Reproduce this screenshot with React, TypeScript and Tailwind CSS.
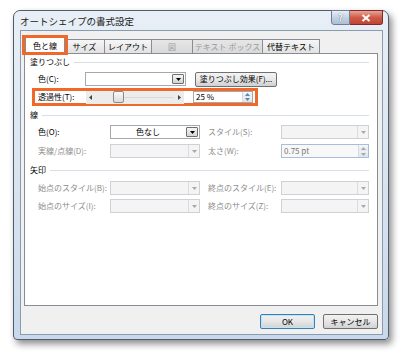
import React from "react";

const ORANGE = "border-[#ef6a2a]";

function Arrow({ disabled = false }: { disabled?: boolean }) {
  return (
    <svg width="5" height="3" viewBox="0 0 5 3">
      <path d="M0 0h5L2.5 3z" fill={disabled ? "#a8a8a8" : "#000"} />
    </svg>
  );
}

function Combo({ width, text, disabled = false }: { width: string; text?: string; disabled?: boolean }) {
  return (
    <div
      className={`${width} h-[14px] flex items-stretch border ${
        disabled ? "border-[#cfd1d6] bg-[#f4f4f4]" : "border-[#a6a8ae] bg-white"
      }`}
    >
      <div className="flex-1 flex items-center justify-center text-black">{text}</div>
      {disabled ? (
        <div className="w-[11px] border-l border-[#dcdcdc] flex items-center justify-center">
          <Arrow disabled />
        </div>
      ) : (
        <div className="w-[12px] m-px border border-[#6f6f6f] rounded-[1px] bg-gradient-to-b from-[#f6f6f6] to-[#d4d4d4] flex items-center justify-center">
          <Arrow />
        </div>
      )}
    </div>
  );
}

function Spin({ blue = false }: { blue?: boolean }) {
  const c = blue ? "#5a86b8" : "#a8a8a8";
  return (
    <div className="w-[10px] flex flex-col border-l border-[#d6dbe3]">
      <div className="flex-1 flex items-center justify-center bg-gradient-to-b from-[#f4f7fb] to-[#e3e9f1]">
        <svg width="5" height="3" viewBox="0 0 5 3">
          <path d="M0 3h5L2.5 0z" fill={c} />
        </svg>
      </div>
      <div className="flex-1 flex items-center justify-center bg-gradient-to-b from-[#eef2f7] to-[#dde4ee]">
        <svg width="5" height="3" viewBox="0 0 5 3">
          <path d="M0 0h5L2.5 3z" fill={c} />
        </svg>
      </div>
    </div>
  );
}

function Heading({ label }: { label: string }) {
  return (
    <div className="h-[12px] flex items-center gap-[4px] pr-[3px]">
      <span>{label}</span>
      <div className="flex-1 h-px bg-[#d6dfe7]" />
    </div>
  );
}

const tabs = [
  { label: "サイズ", w: "w-[41px]" },
  { label: "レイアウト", w: "w-[48px]" },
  { label: "図", w: "w-[42px]", disabled: true },
  { label: "テキスト ボックス", w: "w-[71px]", disabled: true },
  { label: "代替テキスト", w: "w-[58px]" },
];

export default function App() {
  return (
    <div className="w-[400px] h-[354px] bg-white pl-[13px] pt-[10px] text-[8px] leading-none text-black font-['Noto_Sans_CJK_JP','Noto_Sans',sans-serif]">
      <div className="w-[376px] h-[330px] flex flex-col rounded-t-[7px] rounded-b-[4px] border border-[#4f5c6b] bg-gradient-to-b from-[#e8eff6] via-[#d9e4ef] to-[#c9d9ea] shadow-[3px_4px_7px_rgba(0,0,0,0.45)] pl-[6px] pr-[5px] pb-[4px]">
        {/* title bar */}
        <div className="h-[19px] flex justify-between">
          <span className="pt-[6px] text-[9.5px] text-[#1a1a1a]">オートシェイプの書式設定</span>
          <div className="flex h-[15px] -mt-px">
            <div className="w-[19px] rounded-bl-[3px] border border-[#6d7f96] bg-gradient-to-b from-[#e7eef6] via-[#c3d2e3] to-[#aebfd4] flex items-center justify-center text-[9px] font-bold text-white [text-shadow:0_0_1px_#334]">
              ?
            </div>
            <div className="w-[33px] rounded-br-[3px] border border-l-0 border-[#7d2a28] bg-gradient-to-b from-[#e8a496] via-[#cf5a48] to-[#c04633] flex items-center justify-center">
              <svg width="10" height="8" viewBox="0 0 10 8">
                <path d="M1.5 1l7 6M8.5 1l-7 6" stroke="#fff" strokeWidth="2" />
              </svg>
            </div>
          </div>
        </div>

        {/* client */}
        <div className="flex-1 flex flex-col bg-[#f0f0f0] border border-[#8a9bb1] pl-[3px] pr-[4px] pt-[6px]">
          {/* tabs */}
          <div className="h-[16px] flex items-end pl-px">
            <div className="relative z-10 w-[40px] h-[17px] -mb-px bg-white border border-b-0 border-[#898c95] flex items-center justify-center">
              色と線
              <span className={`absolute -left-[4px] -top-[3px] w-[46px] h-[20px] border-[3px] ${ORANGE}`} />
            </div>
            {tabs.map((t) => (
              <div
                key={t.label}
                className={`${t.w} h-[14px] -ml-px border border-b-0 border-[#898c95] flex items-center justify-center ${
                  t.disabled
                    ? "bg-gradient-to-b from-[#e6e6e6] to-[#d9d9d9] text-[#9a9a9a]"
                    : "bg-gradient-to-b from-[#f6f6f6] to-[#e2e2e2]"
                }`}
              >
                {t.label}
              </div>
            ))}
          </div>

          {/* panel */}
          <div className="h-[253px] bg-white border border-[#898c95] px-[5px] pt-[2px] flex flex-col">
            <Heading label="塗りつぶし" />
            <div className="h-[18px] mt-[2px] flex items-center pl-[8px]">
              <span className="w-[47px]">色(C):</span>
              <Combo width="w-[101px]" />
              <div className="ml-[9px] w-[82px] h-[15px] rounded-[2px] border border-[#707070] bg-gradient-to-b from-[#f3f3f3] via-[#e8e8e8] to-[#d0d0d0] flex items-center justify-center">
                塗りつぶし効果(F)...
              </div>
            </div>
            <div className={`ml-[2px] w-[226px] h-[18px] border-[3px] ${ORANGE} flex items-center pl-[3px]`}>
              <span className="w-[48px]">透過性(T):</span>
              <div className="w-[98px] h-[13px] bg-[#ececec] flex items-center">
                <svg width="10" height="5" viewBox="0 0 10 5">
                  <path d="M6 0v5L3 2.5z" fill="#444" />
                </svg>
                <div className="w-[17px] h-px" />
                <div className="w-[11px] h-[12px] rounded-[2px] border border-[#8b8b8b] bg-gradient-to-b from-[#fafafa] to-[#dcdcdc]" />
                <div className="flex-1 h-px bg-[#d8d8d8]" />
                <svg width="10" height="5" viewBox="0 0 10 5">
                  <path d="M4 0v5L7 2.5z" fill="#444" />
                </svg>
              </div>
              <div className="ml-[9px] w-[60px] h-[12px] border border-[#a6a8ae] bg-white flex">
                <span className="flex-1 flex items-center pl-[2px]">25 %</span>
                <Spin blue />
              </div>
            </div>

            <div className="mt-[3px]">
              <Heading label="線" />
            </div>
            <div className="h-[18px] mt-[2px] flex items-center pl-[8px]">
              <span className="w-[72px]">色(O):</span>
              <Combo width="w-[90px]" text="色なし" />
              <span className="ml-[8px] w-[73px] text-[#8c8c8c]">スタイル(S):</span>
              <Combo width="w-[88px]" disabled />
            </div>
            <div className="h-[18px] mt-px flex items-center pl-[8px]">
              <span className="w-[72px] text-[#8c8c8c]">実線/点線(D):</span>
              <Combo width="w-[90px]" disabled />
              <span className="ml-[8px] w-[73px] text-[#8c8c8c]">太さ(W):</span>
              <div className="w-[88px] h-[14px] border border-[#a9bedb] bg-[#f8f8f8] flex">
                <span className="flex-1 flex items-center pl-[2px] text-[#777]">0.75 pt</span>
                <Spin />
              </div>
            </div>

            <div className="mt-[4px]">
              <Heading label="矢印" />
            </div>
            <div className="h-[18px] mt-[3px] flex items-center pl-[8px] text-[#8c8c8c]">
              <span className="w-[72px]">始点のスタイル(B):</span>
              <Combo width="w-[90px]" disabled />
              <span className="ml-[8px] w-[73px]">終点のスタイル(E):</span>
              <Combo width="w-[88px]" disabled />
            </div>
            <div className="h-[18px] flex items-center pl-[8px] text-[#8c8c8c]">
              <span className="w-[72px]">始点のサイズ(I):</span>
              <Combo width="w-[90px]" disabled />
              <span className="ml-[8px] w-[73px]">終点のサイズ(Z):</span>
              <Combo width="w-[88px]" disabled />
            </div>
          </div>

          {/* buttons */}
          <div className="mt-[8px] flex justify-end gap-[8px]">
            <div className="w-[55px] h-[15px] rounded-[2px] border border-[#3c7fb1] shadow-[0_0_0_1px_#bfe4f8_inset] bg-gradient-to-b from-[#f2f2f2] via-[#e6e6e6] to-[#d2d2d2] flex items-center justify-center">
              OK
            </div>
            <div className="w-[55px] h-[15px] rounded-[2px] border border-[#707070] bg-gradient-to-b from-[#f2f2f2] via-[#e6e6e6] to-[#d2d2d2] flex items-center justify-center">
              キャンセル
            </div>
          </div>
        </div>
      </div>
    </div>
  );
}
